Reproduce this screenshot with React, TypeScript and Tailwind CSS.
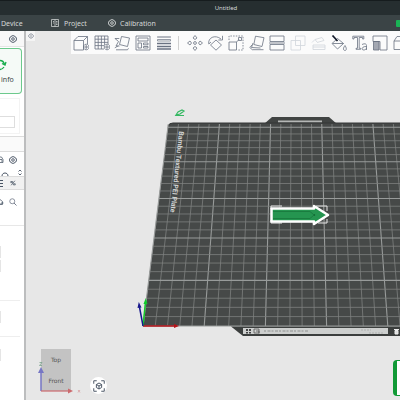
import React from 'react';

type IconProps = { children: React.ReactNode; className?: string };

const Icon = ({ children, className = 'w-4 h-4' }: IconProps) => (
  <svg
    viewBox="0 0 16 16"
    className={`${className} shrink-0`}
    fill="none"
    stroke="currentColor"
    strokeWidth="0.8"
    aria-hidden="true"
  >
    {children}
  </svg>
);

const Gear = ({ className = 'w-2 h-2' }: { className?: string }) => (
  <Icon className={className}>
    <path strokeWidth="1.8" d="M5.5 1.5h5l1 2 2.2.5 1.5 4-1.5 4-2.2.5-1 2h-5l-1-2-2.2-.5-1.5-4 1.5-4 2.2-.5z" />
    <circle cx="8" cy="8" r="2.6" strokeWidth="1.8" />
  </Icon>
);

const fileTools = [
  {
    label: 'Add',
    icon: <path d="M1 5.5h9.5V15H1zM1 5.5L5 1.5h9.5l-4 4M14.5 1.5V9M13.2 9.2a2.8 2.8 0 1 0 .1 0M13.2 10v4M11.2 12h4" />,
  },
  {
    label: 'Add plate',
    icon: (
      <path d="M1 1h13v8M1 1v13h9M1 4.2h13M1 7.4h13M1 10.6h9M4.2 1v13M7.4 1v13M10.6 1v9M13 9.2a2.8 2.8 0 1 0 .1 0M13 10v4M11 12h4" />
    ),
  },
  {
    label: 'Auto orient',
    icon: <path d="M7.5 1.5l8 1.5-2 8.500-8-2zM.8 3.500h4.500M1 3.500l3.500 3L2 11h3.500M.8 12.800l3.500-2M2 14.800h11.500l1-1.500" />,
  },
  {
    label: 'Arrange',
    icon: (
      <g>
        <path d="M1 1h14v14H1z" />
        <path d="M3 3h10v3H3zM3 8h3.500v5H3zM8.500 8H13v1.800H8.500zM8.500 11.500H13V13H8.500z" />
      </g>
    ),
  },
  {
    label: 'Variable layer height',
    icon: (
      <g>
        <path d="M1.500 1.500h13v1h-13z" strokeWidth="0.5" />
        <path d="M1.500 4.500h13v1.500h-13z" strokeWidth="0.7" />
        <path d="M1 8.500h14M1 11.500h14M1 14h14" strokeWidth="1.6" />
      </g>
    ),
  },
];

const editTools = [
  {
    label: 'Move',
    icon: (
      <g>
        <path d="M8 .5l2 2.500-2 1.500-2-1.500zM8 15.500l2-2.500-2-1.500-2 1.500zM.5 8L3 6l1.500 2L3 10zM15.500 8L13 6l-1.500 2 1.500 2z" />
        <circle cx="8" cy="8" r="1.400" />
      </g>
    ),
  },
  {
    label: 'Rotate',
    icon: <path d="M8 5l5.500 5L8 15.200 2.500 10zM.8 9C-.5 3 7-1 13 4M14.500.8V5h-4.200M.8 9L3 7" />,
  },
  {
    label: 'Scale',
    icon: (
      <g>
        <path d="M1 7h7.500v8H1zM8.500 7L11 4.500M10.500 2.500h3v3h-3z" />
        <path d="M1 5V1h14v14h-5" strokeDasharray="1.500 1.200" />
      </g>
    ),
  },
  { label: 'Lay on face', icon: <path d="M6.500 1.200l8.500 1.500-2 8.800-8.200-2zM4 8l-1.500 4.500 9 .5M.8 12.500l2.500 2.200h11.200M.8 12.500L3 10" /> },
  { label: 'Cut', icon: <path d="M1 1h14v5.500H1zM1 9.500h14V15H1zM0 8h16" /> },
  { label: 'Boolean', faded: true, icon: <path d="M1 5.500h9.500V15H1zM5.500 1H15v9.500H5.500z" /> },
  {
    label: 'Simplify',
    faded: true,
    icon: <path d="M2 10h12v4.500H2zM1 7.500l3-3 7-2 2 3-7 2M4 4.500L6 7M2 12h12" />,
  },
  {
    label: 'Paint',
    icon: (
      <g>
        <path d="M6.500 3.500l6 5-6 5.500L1 8.500zM1.500 8.500h11M14 10.500c-3 4-.8 5 0 5s2.500-1 0-5z" />
        <path d="M1.500.5l5 5.500" strokeWidth="1.700" className="text-gray-900" stroke="currentColor" />
      </g>
    ),
  },
  {
    label: 'Text',
    icon: <path d="M.8 1.200h11V4h-1.200V2.500H7.200v10.800h1.500v1H4v-1h1.500V2.500H2V4H.8zM10 9.500c3-1.500 4.500-.5 4.500 1V15M14.500 11.500c-5-.3-5.500 3.500-2.700 3.500 1.500 0 2.700-1.200 2.700-2" />,
  },
  {
    label: 'Color',
    icon: (
      <g>
        <path d="M1 1h14v14H8V6.500H1z" />
        <path d="M1.500 6.500h5.500V15H1.500z" fill="currentColor" fillOpacity="0.600" />
      </g>
    ),
  },
  { label: 'Assembly', icon: <path d="M1 6l3-4.500h11v13H1zM1 6h11v8M12 6l3-4.500" /> },
];

// Plate grid is projected from plate cells to screen space
const depth = (row: number) => 1 + 0.00767 * row;
const plateY = (row: number) => (326 - 6.975 * row) / depth(row);
const plateX = (col: number, row: number) => 297 + (143 + 12.24 * col - 297) / depth(row);

const rows = Array.from({ length: 26 }, (_, i) => i);
const cols = Array.from({ length: 26 }, (_, i) => i);

const Plate = () => (
  <svg
    viewBox="26 31 374 369"
    width="374"
    height="369"
    className="absolute left-0 top-0"
    role="img"
    aria-label="Build plate"
  >
    <path d="M264 124l8-7h57l8 7z" fill="#414443" />
    <path d="M278 120.500h44v2h-44z" fill="#b5b7b6" />
    <path d="M143 326L168 126q1-3 5-3h357v203z" fill="#464948" />
    <path d="M168 126q1-3 5-3h357" stroke="#343736" fill="none" />
    <g fill="none">
      {cols.map((c) => (
        <path
          key={c}
          d={`M${plateX(c, 0)} 326L${plateX(c, 25.6)} 124`}
          stroke={c % 5 === 0 ? '#989b9a' : '#7d807f'}
          strokeWidth={c % 5 === 0 ? 1.1 : 0.8}
        />
      ))}
      {rows.map((r) => (
        <path
          key={r}
          d={`M${plateX(0, r)} ${plateY(r)}H520`}
          stroke={r % 5 === 0 ? '#989b9a' : '#7d807f'}
          strokeWidth={r % 5 === 0 ? 1.1 : 0.8}
        />
      ))}
    </g>
    <text
      transform="translate(179 131) rotate(96)"
      fill="#cfd1d0"
      fontSize="7"
      fontWeight="700"
      fontFamily="Roboto, sans-serif"
    >
      Bambu Textured PEI Plate
    </text>

    {/* plate name edit pencil */}
    <path d="M176 115l2-3 4-2 2 1-4 3zM176 115.500h8" stroke="#35b862" strokeWidth="1.200" fill="none" />

    {/* front lip */}
    <path d="M231 326.500h289V336H243z" fill="#3b3e3d" />
    <path d="M243 328h145v6H243z" fill="#cdcfce" />
    <path d="M246 329h2v2h-2zM249 329h2v2h-2zM246 332h2v1.500h-2zM249 332h2v1.500h-2z" fill="#444" />
    <path d="M254 329h5v4h-5zM256 331h3v2.500" stroke="#555" strokeWidth="0.800" fill="none" />
    <path d="M264 331h44" stroke="#8f9190" strokeDasharray="2 1.500 3 1" />
    <path d="M361 330h10M369 333h15" stroke="#a3a5a4" strokeWidth="0.700" strokeDasharray="2 1" />
    <path d="M394 329.500h5M395 330.500h3v3.500h-3z" stroke="#eee" fill="#ddd" />

    {/* selected model */}
    <path d="M271 209v-3h11M316 206h11v5M327 219v4h-9M282 223h-11v-3" stroke="#e8e8e8" fill="none" />
    <path
      d="M271.500 208.500H314V206l14 9-14 9v-2.500h-42.500z"
      fill="#259550"
      stroke="#fff"
      strokeWidth="2.500"
      strokeLinejoin="round"
    />
    <path d="M273 211.500h37l4 3.500-4 3.500h-37" stroke="#167339" strokeWidth="0.700" fill="none" />
    <circle cx="314.500" cy="215" r="0.700" fill="#0e5829" />

    {/* plate origin axes */}
    <path d="M143 326h32" stroke="#b51218" strokeWidth="1.500" />
    <path d="M174 324l5 2-5 2z" fill="#b51218" />
    <path d="M143 326l2.300-22" stroke="#12c92b" strokeWidth="1.500" />
    <path d="M143.500 304l2.300-6 1.700 6z" fill="#12c92b" />
    <path d="M143 326l-3.500-19" stroke="#17178c" strokeWidth="1.500" />
    <path d="M137.500 308l1.300-6 2.700 5.500z" fill="#17178c" />
  </svg>
);

const ViewCube = () => (
  <svg viewBox="0 0 46 48" width="46" height="48" role="img" aria-label="View cube">
    <path d="M4 3h30v42H4z" fill="#c3c3c3" />
    <g fill="#555" fontSize="6" textAnchor="middle" fontFamily="'DejaVu Sans', sans-serif">
      <text x="19" y="16">Top</text>
      <text x="19" y="37">Front</text>
    </g>
    <path d="M4 45V26" stroke="#7676c4" strokeWidth="1.500" />
    <path d="M1 27l3-6 3 6z" fill="#7676c4" />
    <path d="M4 45h28" stroke="#cc6a6e" strokeWidth="1.200" />
    <path d="M31 42.500l5 2.500-5 2.500z" fill="#cc6a6e" />
    <path d="M41 44l2 2.500M43 44l-2 2.500" stroke="#d59396" strokeWidth="0.700" />
    <path d="M2.500 16.500h2.500l-2.500 3H5" stroke="#7aa28b" strokeWidth="0.800" fill="none" />
  </svg>
);

const Sidebar = () => (
  <aside className="w-[26px] shrink-0 flex flex-col overflow-hidden bg-white border-r-2 border-[#bcbdbe] text-gray-600">
    <div className="h-4 shrink-0 flex items-center justify-end pr-[7px] bg-[#f8f8f8] border-b border-[#e5e5e5]">
      <button aria-label="Printer settings"><Gear className="block w-2 h-2" /></button>
    </div>
    <button className="h-[46px] mt-px mr-0.5 shrink-0 rounded-r border border-l-0 border-[#6cc98c] bg-[#f5faf7] text-[#404545] flex flex-col items-start justify-center gap-1">
      <svg viewBox="0 0 8 12" className="w-2 h-3 text-[#17ad4c]" fill="none" stroke="currentColor" aria-hidden="true">
        <path d="M0 1.500c3 0 4 2 4.500 4M2 4.500l3 1.500 1-3M0 10.500c2 0 3-1 4-2.500" strokeWidth="1.300" />
      </svg>
      <span className="pl-px text-[7px] leading-[9px]">info</span>
    </button>
    <div className="h-9 mt-1 mr-1 shrink-0 border-y border-r border-[#f3f3f3] pt-[17px]">
      <input aria-label="Plate type" className="block w-[15px] h-3 border border-l-0 border-[#dedede]" />
    </div>
    <div className="h-4 mt-0.5 shrink-0 border-y border-[#dcdcdc] bg-[#fafafa]" />
    <div className="h-4 shrink-0 flex items-center justify-end gap-1 pr-[7px]">
      <button aria-label="Sync filament">
        <Icon className="block w-2 h-2"><path strokeWidth="1.500" d="M4 2h5l3 5v6H3M5 7h5v5" /></Icon>
      </button>
      <button aria-label="Filament settings"><Gear className="block w-2 h-2" /></button>
    </div>
    <div className="h-2 shrink-0 flex items-end justify-between pl-px pr-0.5">
      <svg viewBox="0 0 8 4" className="w-2 h-1" fill="none" stroke="currentColor" aria-hidden="true"><path d="M1 4c0-4 6-4 6 0" /></svg>
      <svg viewBox="0 0 4 7" className="w-1 h-[7px]" fill="none" stroke="currentColor" aria-hidden="true">
        <path d="M.5 2.500L2 1l1.500 1.500M.5 4.500L2 6l1.500-1.500" strokeWidth="0.900" />
      </svg>
    </div>
    <div className="h-[14px] shrink-0 flex items-center justify-end gap-1.5 pr-2 bg-[#f1f1f1] border-y border-[#dcdcdc]">
      <button aria-label="List view">
        <svg viewBox="0 0 6 8" className="block w-1.5 h-2" stroke="currentColor" aria-hidden="true"><path d="M0 1.500h5M0 4.500h5M0 7.500h5" /></svg>
      </button>
      <button aria-label="Compare presets">
        <Icon className="block w-1.5 h-2"><path strokeWidth="2" d="M2 4h5v3H2zM9 10h5v3H9zM13 2L3 14" /></Icon>
      </button>
    </div>
    <div className="h-9 shrink-0 flex items-start justify-end gap-1 pr-[7px] pt-2 border-b border-[#e7e7e7]">
      <button aria-label="Save preset">
        <Icon className="block w-2 h-2"><path strokeWidth="1.500" d="M2 13V6l4-3 5 4v6zM8 13v-3h5" /></Icon>
      </button>
      <button aria-label="Search" className="text-gray-500">
        <Icon className="block w-2 h-2"><circle cx="6.500" cy="6.500" r="5" strokeWidth="1.500" /><path strokeWidth="1.800" d="M10 10l5 5" /></Icon>
      </button>
    </div>
    <div className="h-[75px] mr-1 shrink-0 border-b border-[#eeeeee] pt-5">
      <div className="w-px h-3 bg-[#e5e5e5]" />
      <div className="w-px h-3 mt-0.5 bg-[#e5e5e5]" />
    </div>
    <div className="h-9 mr-1 shrink-0 border-b border-[#eeeeee] pt-2.5">
      <div className="w-px h-3 bg-[#e5e5e5]" />
    </div>
    <div className="pt-3">
      <div className="w-px h-3 bg-[#e5e5e5]" />
    </div>
  </aside>
);

export default function App() {
  return (
    <div className="h-screen flex flex-col overflow-hidden bg-[#e7e7e7] font-['Noto_Sans',sans-serif]">
      <header className="shrink-0 text-[#d5d8d8]">
        <div className="h-[15px] flex items-center justify-center pl-[52px] bg-[#262e30] border-t border-[#161c1e]">
          <h1 className="text-[6px] leading-2">Untitled</h1>
        </div>
        <nav className="h-4 flex items-center bg-[#3b4446] text-[7px] leading-[9px]">
          <button className="w-[51px] pl-px text-left">Device</button>
          <button className="w-[57px] flex items-center gap-[5px]">
            <Icon className="w-2 h-2"><path strokeWidth="1.500" d="M1 1h14v14H1zM8 1v14M4 5h2M4 8h2M10 5h3M10 8h3M10 11h3" /></Icon>
            Project
          </button>
          <button className="flex items-center gap-1">
            <Gear />
            Calibration
          </button>
          <button aria-label="Slice" className="ml-auto w-1 h-[7px] rounded-l-[1px] bg-[#19b455]" />
        </nav>
      </header>

      <div className="flex-1 min-h-0 flex">
        <Sidebar />
        <main className="relative flex-1 min-w-0 overflow-hidden">
          <Plate />

          <div className="relative flex items-start">
            <button aria-label="Collapse sidebar" className="w-[9px] h-2.5 shrink-0 bg-[#f4f4f4] flex items-center justify-center text-gray-500">
              <Icon className="w-1.5 h-1.5"><path strokeWidth="1.800" d="M8 0v16M5 3L1 8l4 5M11 3l4 5-4 5" /></Icon>
            </button>
            <div className="ml-9 flex-1 min-w-0 h-[23px] flex items-center overflow-hidden bg-[#fbfbfb] text-gray-500">
              <div className="grid grid-cols-5 w-[103px] shrink-0 justify-items-center">
                {fileTools.map((t) => (
                  <button key={t.label} aria-label={t.label}><Icon>{t.icon}</Icon></button>
                ))}
              </div>
              <div className="w-px h-3.5 ml-1 mr-1.5 shrink-0 bg-[#cfcfcf]" />
              <div className="grid grid-cols-11 w-[226px] shrink-0 justify-items-center">
                {editTools.map((t) => (
                  <button key={t.label} aria-label={t.label} className={t.faded ? 'text-gray-300' : ''}>
                    <Icon>{t.icon}</Icon>
                  </button>
                ))}
              </div>
            </div>
          </div>

          <div className="absolute left-[11px] bottom-[6px] flex items-end gap-[7px]">
            <ViewCube />
            <button aria-label="Fit view" className="w-[17px] h-[17px] rounded-full bg-white flex items-center justify-center text-gray-600">
              <Icon className="w-3 h-3">
                <path strokeWidth="1.300" d="M1 5V1h4M11 1h4v4M15 11v4h-4M5 15H1v-4M8 4l3.500 2v4L8 12l-3.500-2V6zM4.500 6L8 8l3.500-2M8 8v4" />
              </Icon>
            </button>
          </div>

          <div className="absolute right-0 bottom-1 w-[7px] h-9 rounded-l border-y border-l-4 border-[#119a36] bg-white" />
        </main>
      </div>
    </div>
  );
}
